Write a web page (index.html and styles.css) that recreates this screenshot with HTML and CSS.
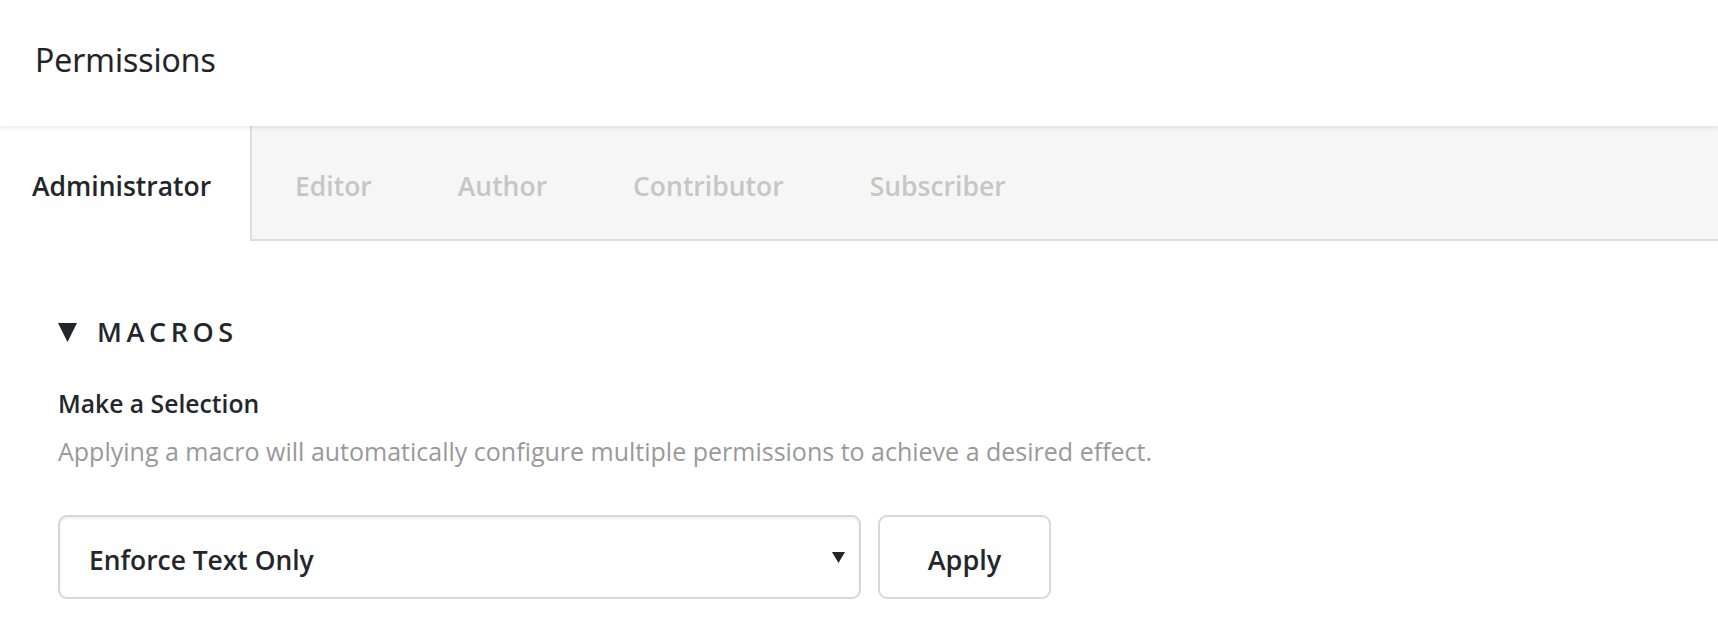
FILE: index.html
```html
<!DOCTYPE html>
<html lang="en">
<head>
<meta charset="utf-8">
<title>Permissions</title>
<link rel="stylesheet" href="styles.css">
</head>
<body>
  <header class="page-header">
    <h1 class="page-title">Permissions</h1>
  </header>
  <nav class="tabs">
    <a class="tab tab-active">Administrator</a>
    <a class="tab">Editor</a>
    <a class="tab">Author</a>
    <a class="tab">Contributor</a>
    <a class="tab">Subscriber</a>
  </nav>
  <main class="content">
    <section class="macros">
      <div class="section-head">
        <svg class="disclosure" width="19" height="19" viewBox="0 0 19 19" aria-hidden="true"><polygon points="0,0 19,0 9.5,19" fill="#23272b"/></svg>
        <h2 class="section-title">MACROS</h2>
      </div>
      <div class="field-label">Make a Selection</div>
      <p class="field-help">Applying a macro will automatically configure multiple permissions to achieve a desired effect.</p>
      <div class="controls">
        <div class="select">
          <span class="select-value">Enforce Text Only</span>
          <svg class="select-arrow" width="13" height="11" viewBox="0 0 13 11" aria-hidden="true"><polygon points="0,0 13,0 6.5,11" fill="#23272b"/></svg>
        </div>
        <button class="btn">Apply</button>
      </div>
    </section>
  </main>
</body>
</html>
```
FILE: styles.css
```css
* { box-sizing: border-box; }

html, body {
  margin: 0;
  padding: 0;
  background: #ffffff;
}

body {
  font-family: "Open Sans", "Noto Sans", "Liberation Sans", sans-serif;
  color: #23272b;
}

.page-header {
  position: relative;
  z-index: 1;
  height: 126px;
  padding: 38px 0 0 35px;
  background: #ffffff;
  box-shadow: 0 2px 5px rgba(0, 0, 0, 0.09);
}

.page-title {
  margin: 0;
  font-size: 32px;
  line-height: 44px;
  font-weight: 400;
  color: #1f2327;
  -webkit-text-stroke: 0.2px #1f2327;
}

.tabs {
  display: flex;
  background: #f6f6f6;
  border-bottom: 2px solid #dedede;
  height: 115px;
}

.tab {
  display: block;
  padding: 41px 43px 0 43px;
  font-size: 26.5px;
  line-height: 38px;
  font-weight: 600;
  color: #c6c6c6;
  white-space: nowrap;
}

.tab-active {
  width: 252px;
  padding-left: 32px;
  background: #ffffff;
  color: #23272b;
  border-right: 2px solid #dedede;
  height: 115px;
  margin-bottom: -2px;
}

.content {
  padding: 73px 58px 40px 58px;
}

.section-head {
  display: flex;
  align-items: center;
  gap: 20px;
  height: 36px;
}

.disclosure {
  display: block;
  flex: none;
}

.section-title {
  margin: 0;
  font-size: 27px;
  line-height: 36px;
  font-weight: 600;
  letter-spacing: 4.6px;
  color: #23272b;
}

.field-label {
  margin-top: 38px;
  font-size: 24.7px;
  line-height: 32px;
  font-weight: 600;
  color: #23272b;
}

.field-help {
  margin: 15px 0 0 0;
  font-size: 25px;
  line-height: 32px;
  font-weight: 400;
  color: #999999;
}

.controls {
  display: flex;
  gap: 17px;
  margin-top: 48px;
}

.select {
  display: flex;
  align-items: center;
  justify-content: space-between;
  width: 803px;
  height: 84px;
  padding: 5px 14px 0 29px;
  border: 2px solid #d6d6d6;
  border-radius: 9px;
  background: #ffffff;
  box-shadow: inset 0 2px 3px rgba(0, 0, 0, 0.06);
}

.select-value {
  font-size: 26.4px;
  line-height: 36px;
  font-weight: 600;
  color: #23272b;
}

.select-arrow {
  display: block;
  margin-top: -4px;
}

.btn {
  width: 173px;
  height: 84px;
  padding: 5px 0 0 0;
  border: 2px solid #d9d9d9;
  border-radius: 9px;
  background: #ffffff;
  font-family: inherit;
  font-size: 27px;
  line-height: 36px;
  font-weight: 600;
  color: #23272b;
}
```
